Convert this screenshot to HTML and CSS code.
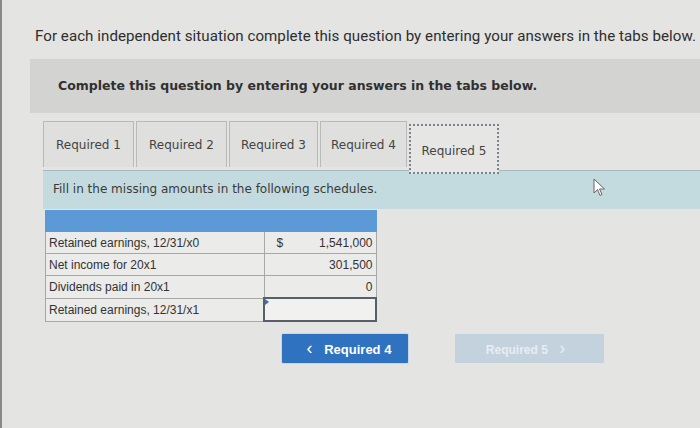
FILE: index.html
```html
<!DOCTYPE html>
<html lang="en">
<head>
  <meta charset="UTF-8">
  <title>Required 5</title>
  <link rel="stylesheet" href="styles.css">
</head>
<body>
  <div class="page">
    <p class="intro">For each independent situation complete this question by entering your answers in the tabs below.</p>

    <div class="banner">Complete this question by entering your answers in the tabs below.</div>

    <div class="tabs">
      <div class="tab">Required 1</div>
      <div class="tab">Required 2</div>
      <div class="tab">Required 3</div>
      <div class="tab">Required 4</div>
      <div class="tab active">Required 5</div>
    </div>

    <div class="instructions">Fill in the missing amounts in the following schedules.</div>

    <table class="schedule">
      <tr class="head"><td colspan="3"></td></tr>
      <tr>
        <td class="label">Retained earnings, 12/31/x0</td>
        <td class="cur">$</td>
        <td class="amt">1,541,000</td>
      </tr>
      <tr>
        <td class="label">Net income for 20x1</td>
        <td class="cur"></td>
        <td class="amt">301,500</td>
      </tr>
      <tr>
        <td class="label">Dividends paid in 20x1</td>
        <td class="cur"></td>
        <td class="amt">0</td>
      </tr>
      <tr>
        <td class="label">Retained earnings, 12/31/x1</td>
        <td class="input" colspan="2"><span class="flag"></span></td>
      </tr>
    </table>

    <div class="nav">
      <div class="btn prev"><span class="chev">&lsaquo;</span> Required 4</div>
      <div class="btn next">Required 5 <span class="chev">&rsaquo;</span></div>
    </div>

    <svg class="cursor" width="14" height="20" viewBox="0 0 14 20">
      <path d="M1 1 L1 15 L4.5 11.5 L7 17.5 L9 16.5 L6.5 11 L11.5 11 Z" fill="#fff" stroke="#666" stroke-width="1"/>
    </svg>
  </div>
</body>
</html>
```

FILE: styles.css
```css
body {
  margin: 0;
  padding: 0;
  background-color: #e4e4e2;
  font-family: "DejaVu Sans", Verdana, sans-serif;
}
.page {
  position: relative;
  height: 428px;
  overflow: hidden;
  border-left: 2px solid #8a8a88;
  box-sizing: border-box;
}
.intro {
  margin: 0;
  padding: 27px 0 0 33px;
  font-family: Roboto, "Liberation Sans", sans-serif;
  font-size: 15.1px;
  letter-spacing: 0.05px;
  color: #2e2e2e;
  white-space: nowrap;
}
.banner {
  margin: 14px 0 0 28px;
  height: 54px;
  line-height: 54px;
  padding-left: 28px;
  background-color: #d3d3d1;
  font-size: 12.5px;
  font-weight: bold;
  color: #303030;
}
.tabs {
  display: flex;
  align-items: flex-start;
  margin: 8px 0 0 41px;
  height: 49px;
}
.tab {
  width: 91px;
  height: 46px;
  line-height: 46px;
  margin-right: 2px;
  box-sizing: border-box;
  border: 1px solid #b9b9b7;
  border-bottom: none;
  background-color: #dfdfdd;
  text-align: center;
  font-size: 12px;
  color: #444;
}
.tab:nth-child(2) { width: 91px; }
.tab:nth-child(3) { width: 89px; }
.tab:nth-child(4) { width: 87px; }
.tab.active {
  width: 90px;
  height: 50px;
  line-height: 50px;
  margin-top: 3px;
  border: 2px dotted #7a8290;
  background-color: #e6e6e4;
}
.instructions {
  margin: 0 0 0 41px;
  height: 38px;
  line-height: 36px;
  padding-left: 10px;
  background-color: #c3dade;
  border-top: 1px solid #a9b8bc;
  font-size: 12px;
  color: #3a3a3a;
}
.schedule {
  margin: 1px 0 0 43px;
  width: 332px;
  border-collapse: collapse;
  font-family: "Liberation Sans", Arial, sans-serif;
  font-size: 12px;
  color: #333;
}
.schedule td {
  border: 1px solid #a8a8a6;
  height: 21px;
  padding: 0 3px;
  background-color: #ebebe9;
}
.schedule .head td {
  height: 20px;
  background-color: #5b9ad6;
  border-color: #5b9ad6;
}
.schedule .label {
  width: 211px;
}
.schedule .cur {
  width: 12px;
  border-right: none;
  padding-left: 12px;
}
.schedule .amt {
  text-align: right;
  border-left: none;
}
.schedule .input {
  position: relative;
  background-color: #f1f1ef;
  border: 2px solid #56606a;
}
.flag {
  position: absolute;
  left: 0;
  top: 0;
  border-left: 4px solid #3b6fb0;
  border-top: 3px solid transparent;
  border-bottom: 3px solid transparent;
}
.nav {
  display: flex;
  margin: 12px 0 0 280px;
  gap: 47px;
}
.btn {
  height: 29px;
  line-height: 29px;
  text-align: center;
  font-family: "Liberation Sans", Arial, sans-serif;
  font-size: 13px;
  font-weight: bold;
  border-radius: 1px;
}
.btn .chev {
  font-size: 18px;
  font-weight: normal;
  margin: 0 8px;
}
.prev {
  width: 126px;
  background-color: #2f72c0;
  color: #fff;
  box-shadow: 0 0 0 1px #c8d6e6;
}
.next {
  width: 149px;
  background-color: #c4d2de;
  color: #e6edf3;
  font-size: 12px;
}
.cursor {
  position: absolute;
  left: 591px;
  top: 178px;
}
```
